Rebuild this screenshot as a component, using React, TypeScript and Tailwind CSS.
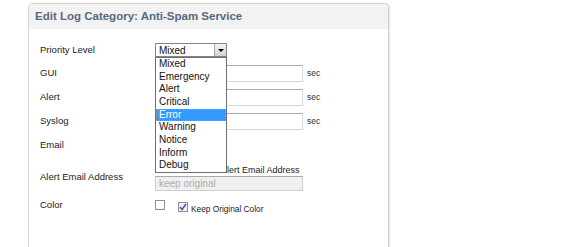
import React from 'react';

const levels = ['Mixed', 'Emergency', 'Alert', 'Critical', 'Error', 'Warning', 'Notice', 'Inform', 'Debug'];

const font = { fontFamily: '"Liberation Sans", Arial, sans-serif' };

const Box: React.FC<{ checked?: boolean; className?: string }> = ({ checked, className = '' }) => (
  <div
    className={`w-[10px] h-[10px] border border-[#8f8f8f] flex items-center justify-center ${checked ? 'bg-[#eef0f4]' : 'bg-white'} ${className}`}
  >
    {checked && (
      <svg width="8" height="8" viewBox="0 0 8 8">
        <polyline points="1,4 3,6.5 7,1" fill="none" stroke="#3d55a6" strokeWidth="1.4" />
      </svg>
    )}
  </div>
);

const TimeInput: React.FC = () => (
  <div className="flex items-center">
    <div className="w-[148px] h-[17px] bg-white border border-[#d6d6d6] border-t-[#aaaaaa]" />
    <span className="ml-[4px] text-[8.5px] text-[#333]">sec</span>
  </div>
);

const Row: React.FC<{ label: string; className?: string; children?: React.ReactNode }> = ({ label, className = '', children }) => (
  <div className={`flex items-center ${className}`}>
    <div className="w-[115px] shrink-0">{label}</div>
    {children}
  </div>
);

export default function App() {
  return (
    <div className="w-[576px] h-[247px] overflow-hidden bg-white text-[9.5px] text-[#222]" style={font}>
      <div className="ml-[28px] mt-[3px] w-[361px] h-[270px] rounded-t-[5px] border border-b-0 border-[#d3d3d3] shadow-[1px_0_2px_rgba(0,0,0,0.12)]">
        <div className="h-[25px] rounded-t-[5px] bg-[#f2f2f2] flex items-center pl-[6px] pt-[1px]">
          <span className="text-[11.5px] font-bold text-[#566a80]">Edit Log Category: Anti-Spam Service</span>
        </div>

        <div className="relative pl-[11px] pt-[11px]">
          <Row label="Priority Level" className="h-[21px]">
            <div className="relative w-[72px] h-[14px] border border-[#858585] bg-white flex items-center pl-[3px] text-[10px] text-[#111] -mt-[1px]">
              Mixed
              <div className="absolute right-0 top-0 w-[12px] h-full border-l border-[#a5a5a5] bg-gradient-to-b from-[#f6f6f6] to-[#d2d2d2] flex items-center justify-center">
                <div className="w-0 h-0 border-l-[3px] border-r-[3px] border-t-[3px] border-l-transparent border-r-transparent border-t-black" />
              </div>
            </div>
          </Row>
          <Row label="GUI" className="h-[24px]">
            <TimeInput />
          </Row>
          <Row label="Alert" className="h-[24px]">
            <TimeInput />
          </Row>
          <Row label="Syslog" className="h-[24px]">
            <TimeInput />
          </Row>
          <Row label="Email" className="h-[24px]">
            <Box />
          </Row>
          <div className="flex h-[34px]">
            <div className="w-[115px] shrink-0 pt-[14px] leading-[12px]">Alert Email Address</div>
            <div className="pt-[9px]">
              <div className="h-[10px] flex items-center text-[9px]">
                <span className="ml-[66px]">Alert Email Address</span>
              </div>
              <div className="w-[148px] h-[15px] bg-[#f0f0f0] border border-[#cfcfcf] border-t-[#a9a9a9] flex items-center pl-[3px] text-[10px] text-[#ababab]">
                keep original
              </div>
            </div>
          </div>
          <div className="flex h-[24px]">
            <div className="w-[115px] shrink-0 pt-[8px] leading-[12px]">Color</div>
            <Box className="mt-[9px]" />
            <div className="ml-[13px] mt-[11px] flex items-center h-[10px]">
              <Box checked />
              <span className="ml-[3px] text-[8.3px] text-[#222] mt-[5px]">Keep Original Color</span>
            </div>
          </div>

          <div className="absolute left-[126px] top-[28px] w-[72px] h-[116px] bg-white border border-[#6e6e6e] text-[10px] text-[#111]">
            {levels.map((lv) => (
              <div
                key={lv}
                className={`h-[12.67px] leading-[12.67px] pl-[3px] ${lv === 'Error' ? 'bg-[#3399ff] text-white outline-1 outline-dotted outline-[#e08a2c] -outline-offset-1' : ''}`}
              >
                {lv}
              </div>
            ))}
          </div>
        </div>
      </div>
    </div>
  );
}
